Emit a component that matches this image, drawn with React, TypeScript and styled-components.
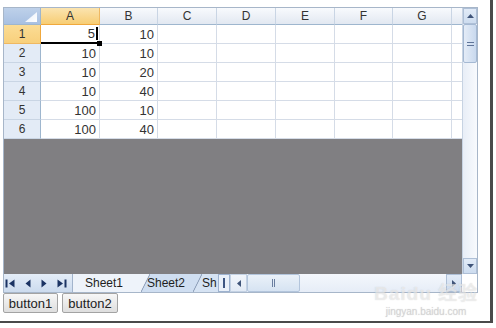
import React from "react";
import styled, { createGlobalStyle, css } from "styled-components";

const GlobalStyle = createGlobalStyle`
  html, body { margin: 0; padding: 0; background: #ffffff; }
  body { font-family: "Liberation Sans", Arial, sans-serif; }
`;

const Page = styled.div`
  position: relative;
  width: 496px;
  height: 328px;
  background: #fff;
  overflow: hidden;
`;

const Window = styled.div`
  width: 493px;
  height: 323px;
  box-sizing: border-box;
  padding: 7px 0 0 3px;
  border-right: 3px solid #4a4a4a;
  border-bottom: 2px solid #4a4a4a;
  display: flex;
  flex-direction: column;
`;

const Spread = styled.div`
  width: 475px;
  height: 286px;
  box-sizing: border-box;
  border: 1px solid #a7b6c9;
  display: flex;
  flex-direction: column;
`;

const Body = styled.div`
  display: flex;
  height: 266px;
`;

const Viewport = styled.div`
  width: 458px;
  height: 100%;
  background: #807f82;
  overflow: hidden;
`;

const Grid = styled.div<{ $cols: string }>`
  display: grid;
  grid-template-columns: ${(p) => p.$cols};
  grid-template-rows: 17px repeat(6, 19px);
  width: max-content;
  background: #fff;
`;

const Corner = styled.div`
  position: relative;
  box-sizing: border-box;
  border-right: 1px solid #9eb6ce;
  border-bottom: 1px solid #9eb6ce;
  background: linear-gradient(#bed1ea, #a8c0e2);
  &::after {
    content: "";
    position: absolute;
    right: 3px;
    bottom: 2px;
    width: 12px;
    height: 10px;
    background: linear-gradient(135deg, #e6eef9, #ffffff);
    clip-path: polygon(100% 0, 100% 100%, 0 100%);
  }
`;

const ColHead = styled.div<{ $sel?: boolean }>`
  box-sizing: border-box;
  border-right: 1px solid ${(p) => (p.$sel ? "#efb862" : "#c9d5e4")};
  border-bottom: 1px solid ${(p) => (p.$sel ? "#f0a83c" : "#9eb6ce")};
  background: ${(p) =>
    p.$sel ? "linear-gradient(#fbe4b0, #f7cd74)" : "linear-gradient(#f8fafd, #e2e8f1)"};
  color: #333;
  font-size: 12px;
  line-height: 16px;
  text-align: center;
`;

const RowHead = styled.div<{ $sel?: boolean }>`
  box-sizing: border-box;
  border-right: 1px solid ${(p) => (p.$sel ? "#f0a83c" : "#9eb6ce")};
  border-bottom: 1px solid ${(p) => (p.$sel ? "#efb862" : "#c9d5e4")};
  background: ${(p) => (p.$sel ? "linear-gradient(#fbdc95, #f8d07c)" : "#e3ebf6")};
  color: #333;
  font-size: 12px;
  line-height: 18px;
  text-align: center;
`;

const Cell = styled.div<{ $active?: boolean }>`
  position: relative;
  box-sizing: border-box;
  border-right: 1px solid #d5dce7;
  border-bottom: 1px solid #d5dce7;
  padding-right: 3px;
  display: flex;
  align-items: center;
  justify-content: flex-end;
  color: #333;
  font-size: 13px;
  ${(p) =>
    p.$active &&
    css`
      border-bottom: 2px solid #000;
      padding-right: 1px;
      &::after {
        content: "";
        position: absolute;
        right: -3px;
        bottom: -4px;
        width: 5px;
        height: 5px;
        background: #000;
        z-index: 2;
      }
    `}
`;

const Caret = styled.span`
  display: inline-block;
  width: 2px;
  height: 13px;
  margin-left: 1px;
  background: #000;
`;

const VScroll = styled.div`
  width: 15px;
  box-sizing: border-box;
  display: flex;
  flex-direction: column;
  background: linear-gradient(90deg, #e8eef7, #f8fafd);
  border-left: 1px solid #c7d3e2;
`;

const ScrollBtn = styled.div<{ $hi?: boolean }>`
  flex-shrink: 0;
  box-sizing: border-box;
  display: flex;
  align-items: center;
  justify-content: center;
  border: 1px solid ${(p) => (p.$hi ? "#aebfd6" : "#c3d1e3")};
  background: ${(p) =>
    p.$hi ? "linear-gradient(#e2ebf7, #cddcef)" : "linear-gradient(#f1f5fb, #e2eaf5)"};
  color: #3f5479;
`;

const VBtn = styled(ScrollBtn)`
  height: 16px;
`;

const HBtn = styled(ScrollBtn)<{ $w: number }>`
  width: ${(p) => p.$w}px;
  height: 100%;
`;

const VThumb = styled.div`
  height: 39px;
  box-sizing: border-box;
  border: 1px solid #a5b9d3;
  border-radius: 2px;
  background: linear-gradient(90deg, #e4ecf7, #c9d9ee);
  display: flex;
  flex-direction: column;
  align-items: center;
  justify-content: center;
  gap: 2px;
`;

const GripH = styled.span`
  width: 7px;
  height: 1px;
  background: #5f7498;
`;

const Track = styled.div`
  flex: 1;
`;

const BottomBar = styled.div`
  height: 18px;
  display: flex;
  background: linear-gradient(#e4edf8, #ccdbee);
`;

const Nav = styled.div`
  width: 68px;
  flex-shrink: 0;
  display: flex;
  align-items: center;
  gap: 10px;
  padding-left: 1px;
  box-sizing: border-box;
  color: #1b3363;
`;

const Tabs = styled.div`
  width: 146px;
  flex-shrink: 0;
  display: flex;
  overflow: hidden;
`;

const Tab = styled.div<{ $color: string; $z: number; $w: number; $pad: number; $first?: boolean }>`
  position: relative;
  z-index: ${(p) => p.$z};
  flex-shrink: 0;
  width: ${(p) => p.$w}px;
  height: 18px;
  box-sizing: border-box;
  margin-left: ${(p) => (p.$first ? 0 : -9)}px;
  padding-left: ${(p) => p.$pad}px;
  font-size: 12px;
  line-height: 18px;
  color: #1e1e1e;
  white-space: nowrap;
  border-left: ${(p) => (p.$first ? "1px solid #a2b4cc" : "none")};
  background:
    linear-gradient(
        to bottom right,
        ${(p) => p.$color} 0,
        ${(p) => p.$color} calc(50% - 0.8px),
        #8092ae 50%,
        transparent calc(50% + 0.8px)
      )
      right / 9px 100% no-repeat,
    linear-gradient(${(p) => p.$color}, ${(p) => p.$color}) left / calc(100% - 9px) 100% no-repeat;
`;

const Splitter = styled.div`
  width: 12px;
  flex-shrink: 0;
  box-sizing: border-box;
  border: 1px solid #9db2cf;
  background: #e9f0f9;
  display: flex;
  align-items: center;
  justify-content: center;
  &::before {
    content: "";
    width: 2px;
    height: 10px;
    background: #3d5682;
  }
`;

const HScroll = styled.div`
  width: 232px;
  flex-shrink: 0;
  display: flex;
  background: linear-gradient(#f4f7fc, #e6edf7);
`;

const HThumb = styled.div`
  width: 53px;
  flex-shrink: 0;
  box-sizing: border-box;
  border: 1px solid #b3c5dc;
  border-radius: 2px;
  background: linear-gradient(#eaf1f9, #d6e3f2);
  display: flex;
  align-items: center;
  justify-content: center;
  gap: 1px;
`;

const GripV = styled.span`
  width: 1px;
  height: 8px;
  background: #6a7ea0;
`;

const CornerBox = styled.div`
  width: 15px;
  flex-shrink: 0;
  background: #fff;
`;

const ButtonRow = styled.div`
  display: flex;
  gap: 4px;
`;

const Btn = styled.button<{ $w: number }>`
  width: ${(p) => p.$w}px;
  height: 20px;
  padding: 0;
  box-sizing: border-box;
  border: 1px solid #a3a3a3;
  border-radius: 2px;
  background: linear-gradient(#f7f7f7, #dedede);
  font-family: "Liberation Sans", Arial, sans-serif;
  font-size: 13px;
  color: #222;
`;

const Watermark = styled.div`
  position: absolute;
  left: 374px;
  top: 278px;
  display: flex;
  flex-direction: column;
  align-items: center;
  color: rgba(255, 255, 255, 0.5);
  text-shadow: 0 0 1px rgba(150, 150, 150, 0.4);
  pointer-events: none;
`;

const WmMain = styled.div`
  font-size: 19px;
  font-weight: bold;
  letter-spacing: 1px;
  font-family: "Liberation Sans", "Noto Sans CJK SC", sans-serif;
`;

const WmSub = styled.div`
  font-size: 10px;
  margin-top: 1px;
  color: rgba(200, 200, 200, 0.55);
`;

const Tri = ({ dir }: { dir: "up" | "down" | "left" | "right" }) => {
  const pts: Record<string, string> = {
    up: "0,4 3.5,0 7,4",
    down: "0,0 7,0 3.5,4",
    left: "4,0 4,7 0,3.5",
    right: "0,0 0,7 4,3.5",
  };
  const vertical = dir === "up" || dir === "down";
  return (
    <svg width={vertical ? 7 : 4} height={vertical ? 4 : 7} viewBox={vertical ? "0 0 7 4" : "0 0 4 7"}>
      <polygon points={pts[dir]} fill="currentColor" />
    </svg>
  );
};

const NavIcon = ({ kind }: { kind: "first" | "prev" | "next" | "last" }) => {
  if (kind === "first")
    return (
      <svg width="10" height="9" viewBox="0 0 10 9">
        <rect x="0.5" y="0.5" width="2" height="8" fill="currentColor" />
        <polygon points="9.5,0.5 4,4.5 9.5,8.5" fill="currentColor" />
      </svg>
    );
  if (kind === "last")
    return (
      <svg width="10" height="9" viewBox="0 0 10 9">
        <polygon points="0.5,0.5 6,4.5 0.5,8.5" fill="currentColor" />
        <rect x="7.5" y="0.5" width="2" height="8" fill="currentColor" />
      </svg>
    );
  if (kind === "prev")
    return (
      <svg width="6" height="9" viewBox="0 0 6 9">
        <polygon points="5.5,0.5 0.5,4.5 5.5,8.5" fill="currentColor" />
      </svg>
    );
  return (
    <svg width="6" height="9" viewBox="0 0 6 9">
      <polygon points="0.5,0.5 5.5,4.5 0.5,8.5" fill="currentColor" />
    </svg>
  );
};

const columns = [
  { key: "A", w: 59, label: "A" },
  { key: "B", w: 58, label: "B" },
  { key: "C", w: 59, label: "C" },
  { key: "D", w: 59, label: "D" },
  { key: "E", w: 59, label: "E" },
  { key: "F", w: 58, label: "F" },
  { key: "G", w: 59, label: "G" },
  { key: "H", w: 59, label: "" },
];

const data: (number | null)[][] = [
  [5, 10],
  [10, 10],
  [10, 20],
  [10, 40],
  [100, 10],
  [100, 40],
];

export default function App() {
  const colTemplate = ["37px", ...columns.map((c) => `${c.w}px`)].join(" ");
  return (
    <Page>
      <GlobalStyle />
      <Window>
        <Spread>
          <Body>
            <Viewport>
              <Grid $cols={colTemplate}>
                <Corner />
                {columns.map((c) => (
                  <ColHead key={c.key} $sel={c.key === "A"}>
                    {c.label}
                  </ColHead>
                ))}
                {data.map((row, r) => (
                  <React.Fragment key={r}>
                    <RowHead $sel={r === 0}>{r + 1}</RowHead>
                    {columns.map((c, ci) => {
                      const v = row[ci];
                      const active = r === 0 && ci === 0;
                      return (
                        <Cell key={c.key} $active={active}>
                          {v ?? ""}
                          {active && <Caret />}
                        </Cell>
                      );
                    })}
                  </React.Fragment>
                ))}
              </Grid>
            </Viewport>
            <VScroll>
              <VBtn $hi>
                <Tri dir="up" />
              </VBtn>
              <VThumb>
                <GripH />
                <GripH />
              </VThumb>
              <Track />
              <VBtn $hi>
                <Tri dir="down" />
              </VBtn>
            </VScroll>
          </Body>
          <BottomBar>
            <Nav>
              <NavIcon kind="first" />
              <NavIcon kind="prev" />
              <NavIcon kind="next" />
              <NavIcon kind="last" />
            </Nav>
            <Tabs>
              <Tab $first $color="#eef3fa" $z={3} $w={78} $pad={12}>
                Sheet1
              </Tab>
              <Tab $color="#cfdef1" $z={2} $w={61} $pad={6}>
                Sheet2
              </Tab>
              <Tab $color="#d6e3f3" $z={1} $w={34} $pad={9}>
                Sh
              </Tab>
            </Tabs>
            <Splitter />
            <HScroll>
              <HBtn $w={17}>
                <Tri dir="left" />
              </HBtn>
              <HThumb>
                <GripV />
                <GripV />
              </HThumb>
              <Track />
              <HBtn $w={16} $hi>
                <Tri dir="right" />
              </HBtn>
            </HScroll>
            <CornerBox />
          </BottomBar>
        </Spread>
        <ButtonRow>
          <Btn $w={55}>button1</Btn>
          <Btn $w={56}>button2</Btn>
        </ButtonRow>
      </Window>
      <Watermark>
        <WmMain>Baidu 经验</WmMain>
        <WmSub>jingyan.baidu.com</WmSub>
      </Watermark>
    </Page>
  );
}
